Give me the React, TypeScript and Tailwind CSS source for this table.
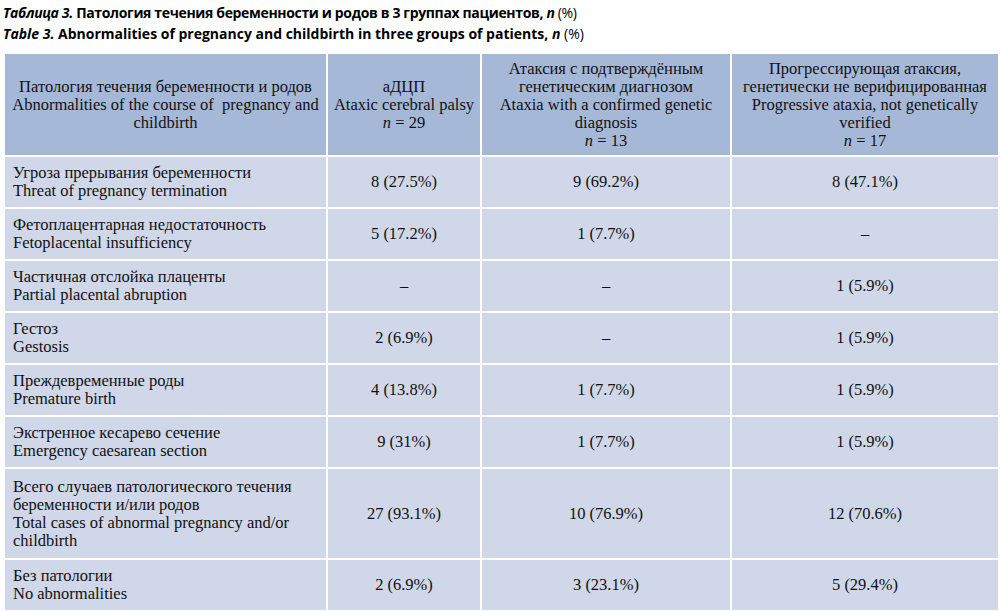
import React from 'react';

type Row = { ru: string[]; en: string[]; vals: [string, string, string] };

const rows: Row[] = [
  { ru: ['Угроза прерывания беременности'], en: ['Threat of pregnancy termination'], vals: ['8 (27.5%)', '9 (69.2%)', '8 (47.1%)'] },
  { ru: ['Фетоплацентарная недостаточность'], en: ['Fetoplacental insufficiency'], vals: ['5 (17.2%)', '1 (7.7%)', '–'] },
  { ru: ['Частичная отслойка плаценты'], en: ['Partial placental abruption'], vals: ['–', '–', '1 (5.9%)'] },
  { ru: ['Гестоз'], en: ['Gestosis'], vals: ['2 (6.9%)', '–', '1 (5.9%)'] },
  { ru: ['Преждевременные роды'], en: ['Premature birth'], vals: ['4 (13.8%)', '1 (7.7%)', '1 (5.9%)'] },
  { ru: ['Экстренное кесарево сечение'], en: ['Emergency caesarean section'], vals: ['9 (31%)', '1 (7.7%)', '1 (5.9%)'] },
  {
    ru: ['Всего случаев патологического течения', 'беременности и/или родов'],
    en: ['Total cases of abnormal pregnancy and/or', 'childbirth'],
    vals: ['27 (93.1%)', '10 (76.9%)', '12 (70.6%)'],
  },
  { ru: ['Без патологии'], en: ['No abnormalities'], vals: ['2 (6.9%)', '3 (23.1%)', '5 (29.4%)'] },
];

export default function App() {
  return (
    <div className="w-[1000px] h-[612px] bg-white overflow-hidden pl-[3px]">
      <div
        className="pt-[2px] text-[14px] leading-[21px] font-bold text-black"
        style={{ fontFamily: '"Open Sans", sans-serif' }}
      >
        <p className="tracking-[-0.35px]">
          <i>Таблица 3.</i> Патология течения беременности и родов в 3 группах пациентов, <i>n</i> <span className="font-normal">(%)</span>
        </p>
        <p className="tracking-[0px]">
          <i>Table 3.</i> Abnormalities of pregnancy and childbirth in three groups of patients, <i>n</i> <span className="font-normal">(%)</span>
        </p>
      </div>

      <table
        className="mt-[8px] border-collapse text-[16.5px] leading-[18px] text-[#111]"
        style={{ fontFamily: '"Liberation Serif", serif' }}
      >
        <colgroup>
          <col className="w-[323px]" />
          <col className="w-[154px]" />
          <col className="w-[250px]" />
          <col className="w-[268px]" />
        </colgroup>
        <thead>
          <tr className="h-[103px] bg-[#a6b8d8]">
            <th className="border-2 border-white font-normal text-center align-middle px-1">
              Патология течения беременности и родов
              <br />
              Abnormalities of the course of&nbsp; pregnancy and childbirth
            </th>
            <th className="border-2 border-white font-normal text-center align-middle px-1">
              аДЦП
              <br />
              Ataxic cerebral palsy
              <br />
              <i>n</i> = 29
            </th>
            <th className="border-2 border-white font-normal text-center align-middle px-1">
              Атаксия с подтверждённым
              <br />
              генетическим диагнозом
              <br />
              Ataxia with a confirmed genetic diagnosis
              <br />
              <i>n</i> = 13
            </th>
            <th className="border-2 border-white font-normal text-center align-middle px-1">
              Прогрессирующая атаксия,
              <br />
              генетически не верифицированная
              <br />
              Progressive ataxia, not genetically verified
              <br />
              <i>n</i> = 17
            </th>
          </tr>
        </thead>
        <tbody>
          {rows.map((r, i) => (
            <tr key={i} className={`bg-[#cfd7e8] ${r.ru.length > 1 ? 'h-[91px]' : 'h-[52px]'}`}>
              <td className="border-2 border-white pl-[8px] pr-2 align-middle">
                {[...r.ru, ...r.en].map((l, j) => (
                  <div key={j}>{l}</div>
                ))}
              </td>
              {r.vals.map((v, j) => (
                <td key={j} className="border-2 border-white text-center align-middle">
                  {v}
                </td>
              ))}
            </tr>
          ))}
        </tbody>
      </table>
    </div>
  );
}
